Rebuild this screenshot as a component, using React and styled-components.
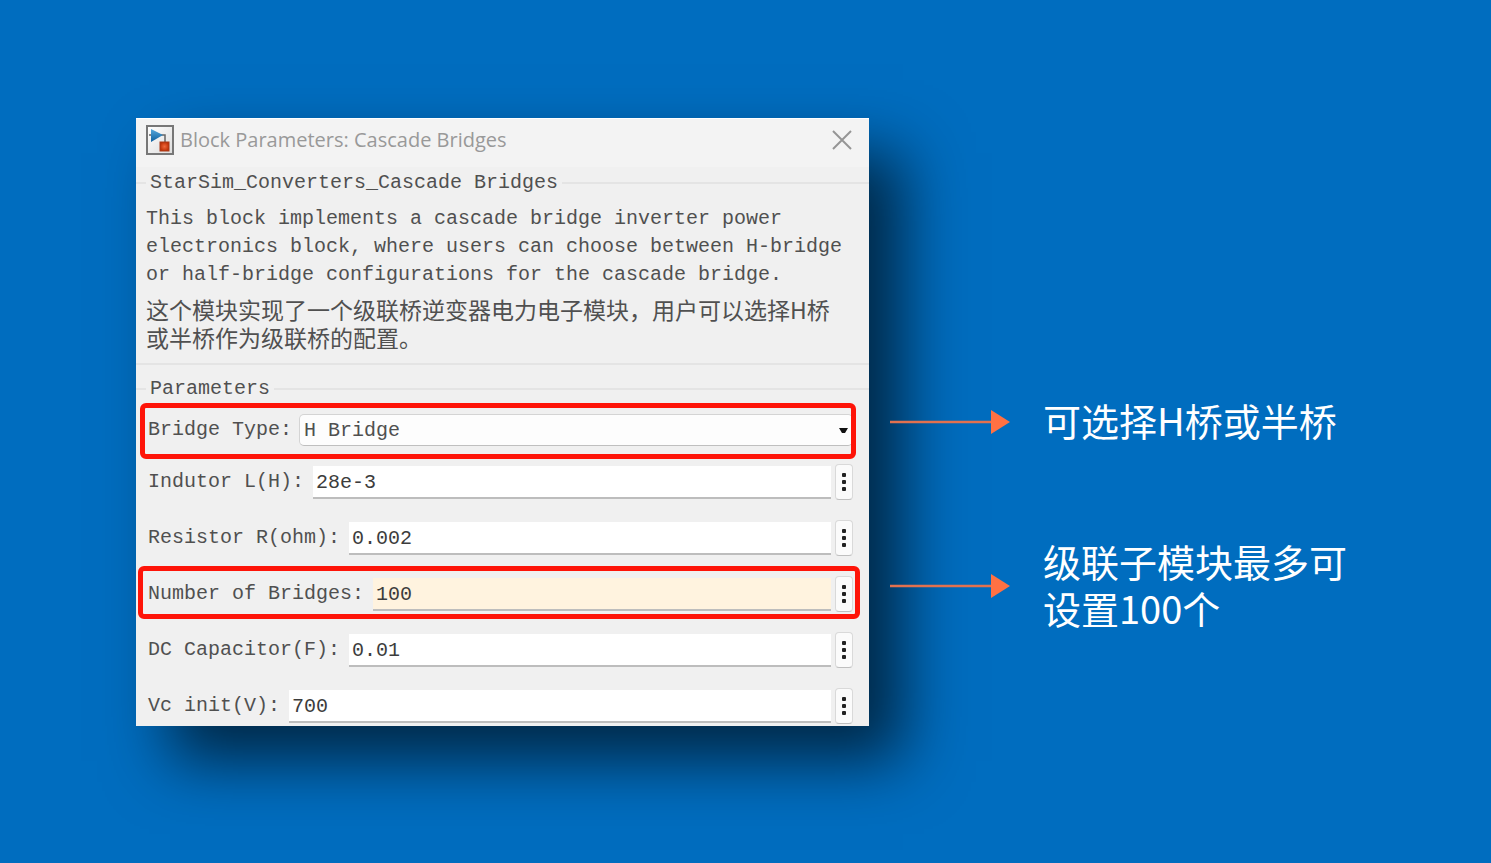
import styled, { createGlobalStyle, css } from 'styled-components';

const GlobalStyle = createGlobalStyle`
    * {
        box-sizing: border-box;
    }

    body {
        margin: 0;
        background: #006dbf;
    }
`

const fields = [
    { id: 'inductor', label: 'Indutor L(H):', value: '28e-3' },
    { id: 'resistor', label: 'Resistor R(ohm):', value: '0.002' },
    { id: 'bridges', label: 'Number of Bridges:', value: '100', edited: true },
    { id: 'capacitor', label: 'DC Capacitor(F):', value: '0.01' },
    { id: 'vcinit', label: 'Vc init(V):', value: '700' },
];

function BlockIcon(){
    return(
        <svg width="28" height="30" viewBox="0 0 28 30" aria-hidden="true">
            <defs>
                <linearGradient id="paper" x1="0" y1="0" x2="1" y2="1">
                    <stop offset="0" stopColor="#ffffff" />
                    <stop offset="1" stopColor="#dcdcdc" />
                </linearGradient>
                <linearGradient id="gain" x1="0" y1="0" x2="0" y2="1">
                    <stop offset="0" stopColor="#56a8dc" />
                    <stop offset="1" stopColor="#0d5f9e" />
                </linearGradient>
                <radialGradient id="scope">
                    <stop offset="0" stopColor="#f0683a" />
                    <stop offset="1" stopColor="#bf3208" />
                </radialGradient>
            </defs>
            <rect x="1" y="1" width="26" height="28" fill="url(#paper)" stroke="#777" strokeWidth="2" />
            <path d="M3 10h4M15 10h4v8" fill="none" stroke="#666" strokeWidth="1.5" />
            <path d="M5 4l12 6-12 7z" fill="url(#gain)" />
            <rect x="14" y="17" width="9" height="9" fill="url(#scope)" stroke="#a83a18" />
        </svg>
    );
}

function Arrow(){
    return(
        <ArrowSvg width="120" height="26" viewBox="0 0 120 26" aria-hidden="true">
            <path d="M0 13h102" stroke="#e2714f" strokeWidth="2.5" />
            <path d="M101 1l19 12-19 12z" fill="#ff7143" />
        </ArrowSvg>
    );
}

function ParameterField({ id, label, value, edited }){
    return(
        <Row $marked={edited && '-10px -7px -7px -8px'}>
            <Label htmlFor={id}>{label}</Label>
            <Entry>
                <TextBox id={id} defaultValue={value} $edited={edited} />
                <MoreButton type="button" aria-label={`${label} more`}>
                    <Dot />
                    <Dot />
                    <Dot />
                </MoreButton>
            </Entry>
        </Row>
    );
}

function App(){
    return(
        <Page>
            <GlobalStyle />
            <Dialog>
                <TitleBar>
                    <BlockIcon />
                    <Title>Block Parameters: Cascade Bridges</Title>
                    <CloseButton type="button" aria-label="Close">
                        <svg width="20" height="20" viewBox="0 0 20 20">
                            <path d="M1 1l18 18M19 1L1 19" stroke="#959595" strokeWidth="2" />
                        </svg>
                    </CloseButton>
                </TitleBar>
                <Description>
                    <Legend>StarSim_Converters_Cascade Bridges</Legend>
                    <Text>
                        This block implements a cascade bridge inverter power electronics block, where users can choose between H-bridge or half-bridge configurations for the cascade bridge.
                    </Text>
                    <ChineseText lang="zh-CN">
                        这个模块实现了一个级联桥逆变器电力电子模块，用户可以选择H桥或半桥作为级联桥的配置。
                    </ChineseText>
                </Description>
                <Parameters>
                    <Legend>Parameters</Legend>
                    <SelectRow $marked="-11px -3px -13px -6px">
                        <Label htmlFor="type">Bridge Type:</Label>
                        <SelectWrap>
                            <Select id="type" defaultValue="H Bridge">
                                <option>H Bridge</option>
                                <option>Half Bridge</option>
                            </Select>
                            <Caret width="9" height="5" viewBox="0 0 9 5" aria-hidden="true">
                                <path d="M0 0h9L6 5H3z" fill="#111" />
                            </Caret>
                        </SelectWrap>
                    </SelectRow>
                    <Fields>
                        {fields.map((field) => (
                            <ParameterField key={field.id} {...field} />
                        ))}
                    </Fields>
                </Parameters>
            </Dialog>
            <Notes lang="zh-CN">
                <Note>
                    <Arrow />
                    <NoteText>可选择H桥或半桥</NoteText>
                </Note>
                <Note>
                    <Arrow />
                    <NoteText>级联子模块最多可设置100个</NoteText>
                </Note>
            </Notes>
        </Page>
    );
}

export default App;

const Page = styled.main`
    display: grid;
    grid-template-columns: minmax(0, 733fr) minmax(0, 486fr);
    align-items: start;
    min-height: 100vh;
    padding: 118px 136px;
    background: #006dbf;
`

const Dialog = styled.section`
    background: #f0f0f0;
    box-shadow: 34px 35px 60px rgba(0, 0, 0, 0.64);
    font-family: 'Liberation Mono', 'Noto Sans CJK SC', monospace;
    font-size: 20px;
    line-height: 28px;
    color: #505050;
`

/* TITLE BAR */
const TitleBar = styled.header`
    display: flex;
    align-items: center;
    gap: 6px;
    height: 49px;
    padding: 0 17px 6px 10px;
    background: #f3f3f3;
    border-top: 1px solid #fff;
`

const Title = styled.h1`
    flex: 1;
    margin: 0;
    font-family: 'Open Sans', sans-serif;
    font-weight: 400;
    font-size: 20px;
    line-height: 28px;
    color: #999;
`

const CloseButton = styled.button`
    display: flex;
    padding: 0;
    border: 0;
    background: none;
`

/* GROUPS */
const Group = styled.fieldset`
    min-width: 0;
    margin: 0;
    border: 0 solid #e4e4e4;
    border-top-width: 2px;
`

const Description = styled(Group)`
    margin-top: 2px;
    padding: 8px 28px 12px 10px;
    border-bottom-width: 2px;
`

const Parameters = styled(Group)`
    margin-top: 10px;
    padding: 11px 16px 2px 10px;
`

const Legend = styled.legend`
    padding: 0 4px;
`

const Text = styled.p`
    margin: 0 -20px 6px 0;
`

const ChineseText = styled.p`
    margin: 0;
    font-family: 'Noto Sans CJK SC', sans-serif;
    font-weight: 400;
    font-size: 23px;
`

/* ROWS */
const Fields = styled.div`
    display: grid;
    gap: 20px;
`

const Row = styled.div`
    position: relative;
    display: flex;
    align-items: center;
    gap: 9px;
    height: 36px;
    padding-left: 2px;

    ${({ $marked }) => $marked && css`
        &::after {
            content: '';
            position: absolute;
            inset: ${$marked};
            border: 5px solid #fe1408;
            border-radius: 6px;
            pointer-events: none;
        }
    `}
`

const SelectRow = styled(Row)`
    gap: 7px;
    height: 32px;
    margin-bottom: 18px;
`

const Label = styled.label`
    white-space: nowrap;
`

const Entry = styled.div`
    display: flex;
    flex: 1;
    align-items: center;
    gap: 4px;
    min-width: 0;
`

const TextBox = styled.input`
    flex: 1;
    min-width: 0;
    height: 33px;
    padding: 2px 3px 0;
    border: 0;
    border-bottom: 2px solid #bdbdbd;
    background: ${({ $edited }) => ($edited ? '#fff3df' : '#fff')};
    font: inherit;
    color: #3c3c3c;
`

const MoreButton = styled.button`
    display: flex;
    flex-direction: column;
    align-items: center;
    justify-content: center;
    gap: 3px;
    width: 18px;
    height: 36px;
    padding: 0;
    border: 1px solid #d9d9d9;
    border-bottom-color: #bfbfbf;
    border-radius: 4px;
    background: #fbfbfb;
`

const Dot = styled.span`
    width: 4px;
    height: 4px;
    border-radius: 1px;
    background: #222;
`

const SelectWrap = styled.div`
    position: relative;
    flex: 1;
    min-width: 0;
`

const Select = styled.select`
    display: block;
    appearance: none;
    width: 100%;
    height: 32px;
    padding: 2px 20px 0 4px;
    border: 1px solid #d4d4d4;
    border-bottom-color: #bfbfbf;
    border-radius: 5px;
    background: #fdfdfd;
    font: inherit;
    color: #505050;
`

const Caret = styled.svg`
    position: absolute;
    top: 14px;
    right: 5px;
    pointer-events: none;
`

/* NOTES */
const Notes = styled.aside`
    display: grid;
    gap: 90px;
    padding: 278px 0 0 21px;
`

const Note = styled.div`
    display: flex;
    align-items: center;
    gap: 33px;
`

const ArrowSvg = styled.svg`
    flex: none;
`

const NoteText = styled.p`
    margin: 0;
    padding-bottom: 4px;
    font-family: 'Noto Sans CJK SC', sans-serif;
    font-weight: 400;
    font-size: 38px;
    line-height: 47px;
    color: #fff;
`
